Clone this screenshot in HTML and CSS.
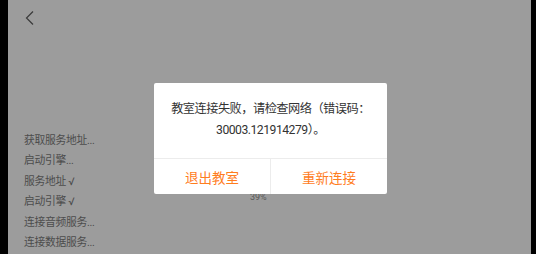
FILE: index.html
```html
<!DOCTYPE html>
<html>
<head>
<meta charset="utf-8">
<link rel="stylesheet" href="styles.css">
</head>
<body>
<div class="screen">
  <div class="bar-left"></div>
  <div class="page">
    <div class="top">
      <svg class="back" width="12" height="16" viewBox="0 0 12 16"><path d="M8 1.5 L1.5 8 L8 14.5" fill="none" stroke="#3a3a3a" stroke-width="1.2"/></svg>
    </div>
    <div class="log">
      <div class="log-item">获取服务地址...</div>
      <div class="log-item">启动引擎...</div>
      <div class="log-item">服务地址 √</div>
      <div class="log-item">启动引擎 √</div>
      <div class="log-item">连接音频服务...</div>
      <div class="log-item">连接数据服务...</div>
    </div>
    <div class="progress">39%</div>
    <div class="dialog">
      <div class="msg">教室连接失败，请检查网络（错误码：<br>30003.121914279）。</div>
      <div class="actions">
        <div class="btn">退出教室</div>
        <div class="btn">重新连接</div>
      </div>
    </div>
  </div>
  <div class="bar-right"></div>
</div>
</body>
</html>
```
FILE: styles.css
```css
html, body { margin: 0; padding: 0; }
body {
  width: 536px; height: 254px; overflow: hidden;
  font-family: Roboto, "Noto Sans CJK SC", sans-serif;
}
.screen { display: flex; width: 536px; height: 254px; }
.bar-left { width: 8px; background: #000; }
.bar-right { width: 5px; background: #000; }
.page {
  flex: 1; position: relative; background: #9c9c9c;
}
.top { height: 40px; padding: 10px 0 0 17px; box-sizing: border-box; }
.back { display: block; }
.log {
  position: absolute; left: 16px; top: 131px;
  display: flex; flex-direction: column;
}
.log-item {
  height: 20.4px; line-height: 20px;
  font-size: 10.8px; letter-spacing: -0.3px; color: #4c4c4c;
}
.progress {
  position: absolute; left: 242px; top: 191px;
  font-size: 9px; color: #5a5a5a; line-height: 12px;
}
.dialog {
  position: absolute; left: 146px; top: 83px;
  width: 233px; height: 111px;
  background: #fff; border-radius: 2px;
  display: flex; flex-direction: column;
}
.msg {
  height: 76px; box-sizing: border-box;
  padding-top: 16px;
  text-align: center; font-size: 12.2px; letter-spacing: -0.5px; line-height: 21px; color: #333;
  border-bottom: 1px solid #ececec;
}
.actions { flex: 1; display: flex; }
.btn {
  flex: 1; display: flex; align-items: center; justify-content: center;
  color: #ff7d1e; font-size: 13.5px;
}
.btn + .btn { border-left: 1px solid #ececec; }
```
